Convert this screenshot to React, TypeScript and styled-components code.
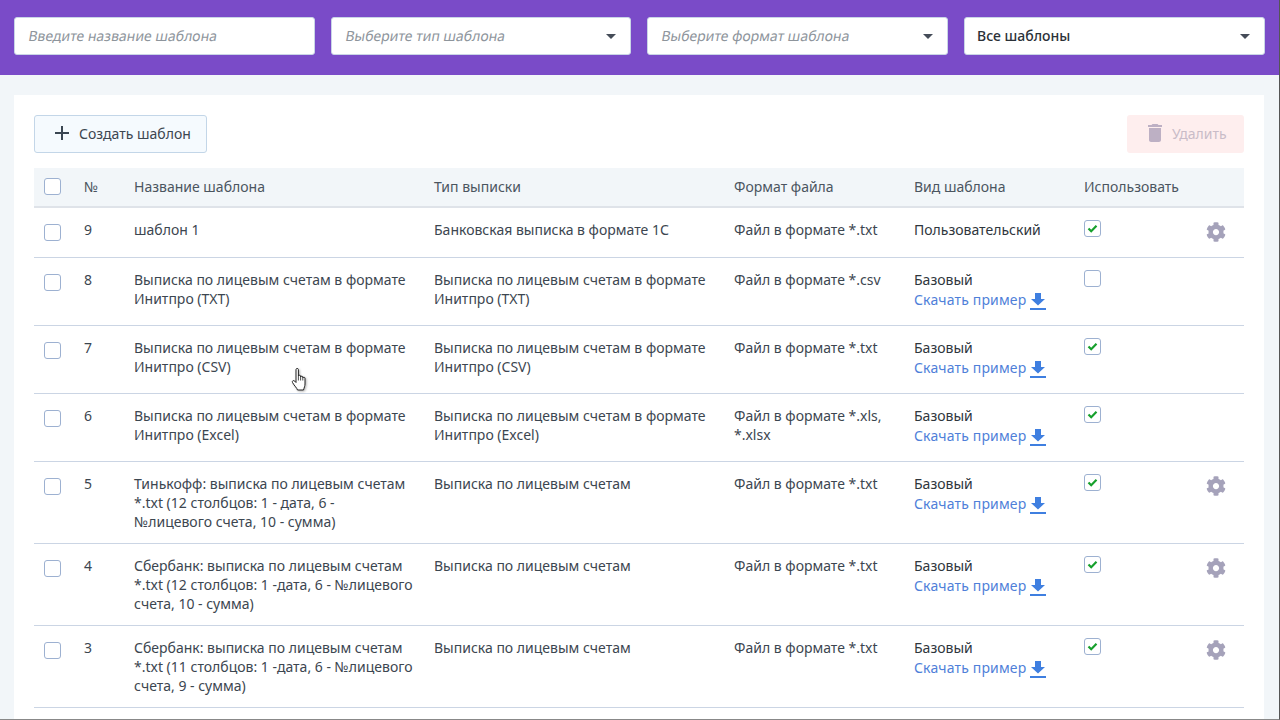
import React from 'react';
import styled, { createGlobalStyle } from 'styled-components';
import { FaCog } from 'react-icons/fa';
import { MdAdd, MdDelete } from 'react-icons/md';

interface ITemplate {
  id: number;
  name: string;
  type: string;
  format: string;
  kind: string;
  example?: boolean;
  used: boolean;
  settings?: boolean;
}

const templates: ITemplate[] = [
  { id: 9, name: 'шаблон 1', type: 'Банковская выписка в формате 1С', format: 'Файл в формате *.txt', kind: 'Пользовательский', used: true, settings: true },
  { id: 8, name: 'Выписка по лицевым счетам в формате Инитпро (TXT)', type: 'Выписка по лицевым счетам в формате Инитпро (TXT)', format: 'Файл в формате *.csv', kind: 'Базовый', example: true, used: false },
  { id: 7, name: 'Выписка по лицевым счетам в формате Инитпро (CSV)', type: 'Выписка по лицевым счетам в формате Инитпро (CSV)', format: 'Файл в формате *.txt', kind: 'Базовый', example: true, used: true },
  { id: 6, name: 'Выписка по лицевым счетам в формате Инитпро (Excel)', type: 'Выписка по лицевым счетам в формате Инитпро (Excel)', format: 'Файл в формате *.xls, *.xlsx', kind: 'Базовый', example: true, used: true },
  { id: 5, name: 'Тинькофф: выписка по лицевым счетам *.txt (12 столбцов: 1 - дата, 6 - №лицевого счета, 10 - сумма)', type: 'Выписка по лицевым счетам', format: 'Файл в формате *.txt', kind: 'Базовый', example: true, used: true, settings: true },
  { id: 4, name: 'Сбербанк: выписка по лицевым счетам *.txt (12 столбцов: 1 -дата, 6 - №лицевого счета, 10 - сумма)', type: 'Выписка по лицевым счетам', format: 'Файл в формате *.txt', kind: 'Базовый', example: true, used: true, settings: true },
  { id: 3, name: 'Сбербанк: выписка по лицевым счетам *.txt (11 столбцов: 1 -дата, 6 - №лицевого счета, 9 - сумма)', type: 'Выписка по лицевым счетам', format: 'Файл в формате *.txt', kind: 'Базовый', example: true, used: true, settings: true },
];

const GlobalStyle = createGlobalStyle`
  html, body {
    margin: 0;
    height: 720px;
    overflow: hidden;
    background: #f2f6f9;
    font-family: 'Noto Sans', 'Open Sans', sans-serif;
    font-size: 14px;
    line-height: 19px;
    color: #3c4650;
  }
  * {
    box-sizing: border-box;
  }
`;

const Page = styled.div`
  position: relative;
  height: 720px;
  overflow: hidden;
  border-right: 1px solid #555;
  border-bottom: 1px solid #888;
`;

const Filters = styled.div`
  display: grid;
  grid-template-columns: 301px 300px 301px 301px;
  gap: 16px;
  height: 75px;
  padding: 17px 14px 0;
  background: #7a4bc8;
`;

const Field = styled.div`
  position: relative;
  height: 38px;
  padding: 8px 12px;
  background: #fff;
  border: 1px solid #c9d5e6;
  border-radius: 3px;
`;

/* upright face slanted by hand, the installed italic is narrower than the reference */
const Placeholder = styled.span`
  display: inline-block;
  transform: skewX(-10deg);
  transform-origin: left bottom;
  color: #8e959c;
`;

const Value = styled.span`
  font-weight: 500;
  color: #2b3138;
`;

const Caret = styled.span`
  position: absolute;
  top: 16px;
  right: 14px;
  width: 0;
  height: 0;
  border-style: solid;
  border-width: 5px 5.5px 0;
  border-color: #454c58 transparent transparent;
`;

const Card = styled.main`
  margin: 20px 15px 0 14px;
  padding: 20px;
  background: #fff;
`;

const Toolbar = styled.div`
  display: flex;
  justify-content: space-between;
  margin-bottom: 15px;
`;

const CreateButton = styled.button`
  display: flex;
  align-items: center;
  gap: 5px;
  width: 173px;
  height: 38px;
  padding: 0 0 2px 15px;
  background: #f5fafe;
  border: 1px solid #c3d6e8;
  border-radius: 3px;
  font: inherit;
  color: #3c4650;
`;

const DeleteButton = styled.button`
  display: flex;
  align-items: center;
  gap: 5px;
  width: 117px;
  height: 38px;
  padding: 0 0 2px 16px;
  background: #feeeee;
  border: 0;
  border-radius: 3px;
  font: inherit;
  color: #c9bcc8;

  svg {
    color: #bdb0c4;
  }
`;

const Table = styled.table`
  width: 1210px;
  table-layout: fixed;
  border-collapse: collapse;
`;

const HeadRow = styled.tr`
  height: 39px;
  background: #f2f6f9;
  border-bottom: 2px solid #dfe3e9;
`;

const HeadCell = styled.th`
  padding: 0 10px 1px;
  font-weight: 400;
  text-align: left;
  color: #4b555f;
`;

const Row = styled.tr`
  height: 50px;
  border-bottom: 1px solid #cbd5e4;
`;

const Cell = styled.td`
  padding: 12px 10px;
  vertical-align: top;
`;

const SelectCell = styled(Cell)`
  padding-top: 16px;
`;

const UseCell = styled(Cell)`
  position: relative;
`;

const Checkbox = styled.span`
  display: flex;
  align-items: center;
  justify-content: center;
  width: 17px;
  height: 17px;
  background: #fff;
  border: 1px solid #9db1d1;
  border-radius: 3px;
`;

const Kind = styled.div`
  color: #2f363d;
`;

const ExampleLink = styled.a`
  display: flex;
  gap: 4px;
  height: 23px;
  margin-top: 1px;
  line-height: 20px;
  letter-spacing: 0.15px;
  color: #4f7fd9;
`;

const DownloadIcon = styled.svg`
  margin-top: 3px;
  color: #3f7fe0;
`;

const Settings = styled(FaCog)`
  position: absolute;
  top: 14px;
  right: 18px;
  display: block;
  color: #a5a2ba;
`;

const HandCursor = styled.svg`
  position: absolute;
  left: 291px;
  top: 368px;
  filter: drop-shadow(1px 1px 1px rgba(0, 0, 0, 0.3));
`;

const Check = () => (
  <svg width="11" height="9" viewBox="0 0 11 9">
    <path d="M1.5 4.500 4.200 7.200 9.500 1.800" fill="none" stroke="#16a02c" strokeWidth="2.2" />
  </svg>
);

const Download = () => (
  <DownloadIcon width="16" height="17" viewBox="0 0 16 17">
    <path d="M5 0h6v6h4l-7 6.500L1 6h4zM0 15h16v2H0z" fill="currentColor" />
  </DownloadIcon>
);

export default function App() {
  return (
    <Page>
      <GlobalStyle />
      <Filters>
        <Field>
          <Placeholder>Введите название шаблона</Placeholder>
        </Field>
        <Field>
          <Placeholder>Выберите тип шаблона</Placeholder>
          <Caret />
        </Field>
        <Field>
          <Placeholder>Выберите формат шаблона</Placeholder>
          <Caret />
        </Field>
        <Field>
          <Value>Все шаблоны</Value>
          <Caret />
        </Field>
      </Filters>
      <Card>
        <Toolbar>
          <CreateButton>
            <MdAdd size={24} color="#3a4652" />
            Создать шаблон
          </CreateButton>
          <DeleteButton>
            <MdDelete size={24} />
            Удалить
          </DeleteButton>
        </Toolbar>
        <Table>
          <colgroup>
            <col width={40} />
            <col width={50} />
            <col width={300} />
            <col width={300} />
            <col width={180} />
            <col width={170} />
            <col width={170} />
          </colgroup>
          <thead>
            <HeadRow>
              <HeadCell>
                <Checkbox />
              </HeadCell>
              <HeadCell>№</HeadCell>
              <HeadCell>Название шаблона</HeadCell>
              <HeadCell>Тип выписки</HeadCell>
              <HeadCell>Формат файла</HeadCell>
              <HeadCell>Вид шаблона</HeadCell>
              <HeadCell>Использовать</HeadCell>
            </HeadRow>
          </thead>
          <tbody>
            {templates.map((item) => (
              <Row key={item.id}>
                <SelectCell>
                  <Checkbox />
                </SelectCell>
                <Cell>{item.id}</Cell>
                <Cell>{item.name}</Cell>
                <Cell>{item.type}</Cell>
                <Cell>{item.format}</Cell>
                <Cell>
                  <Kind>{item.kind}</Kind>
                  {item.example && (
                    <ExampleLink>
                      Скачать пример
                      <Download />
                    </ExampleLink>
                  )}
                </Cell>
                <UseCell>
                  <Checkbox>{item.used && <Check />}</Checkbox>
                  {item.settings && <Settings size={20} />}
                </UseCell>
              </Row>
            ))}
          </tbody>
        </Table>
      </Card>
      <HandCursor width="18" height="24" viewBox="0 0 18 24">
        <path
          d="M5 1.500c0-1.400 2.400-1.400 2.400 0V8c0-1 2.200-1 2.200 0v1c0-1 2.200-1 2.200 0v1c0-1 2.200-1 2.200 0v6c0 2-.8 3.500-1.500 6H6.500c-.5-2-3-4-5-7.500-.8-1.500 1-2.700 2.300-1.300L5 14.500z"
          fill="#fff"
          stroke="#222"
          strokeWidth="1"
        />
        <path d="M7.400 8v4.500M9.600 9v3.500M11.800 10v2.500" fill="none" stroke="#222" strokeWidth="0.8" />
      </HandCursor>
    </Page>
  );
}
